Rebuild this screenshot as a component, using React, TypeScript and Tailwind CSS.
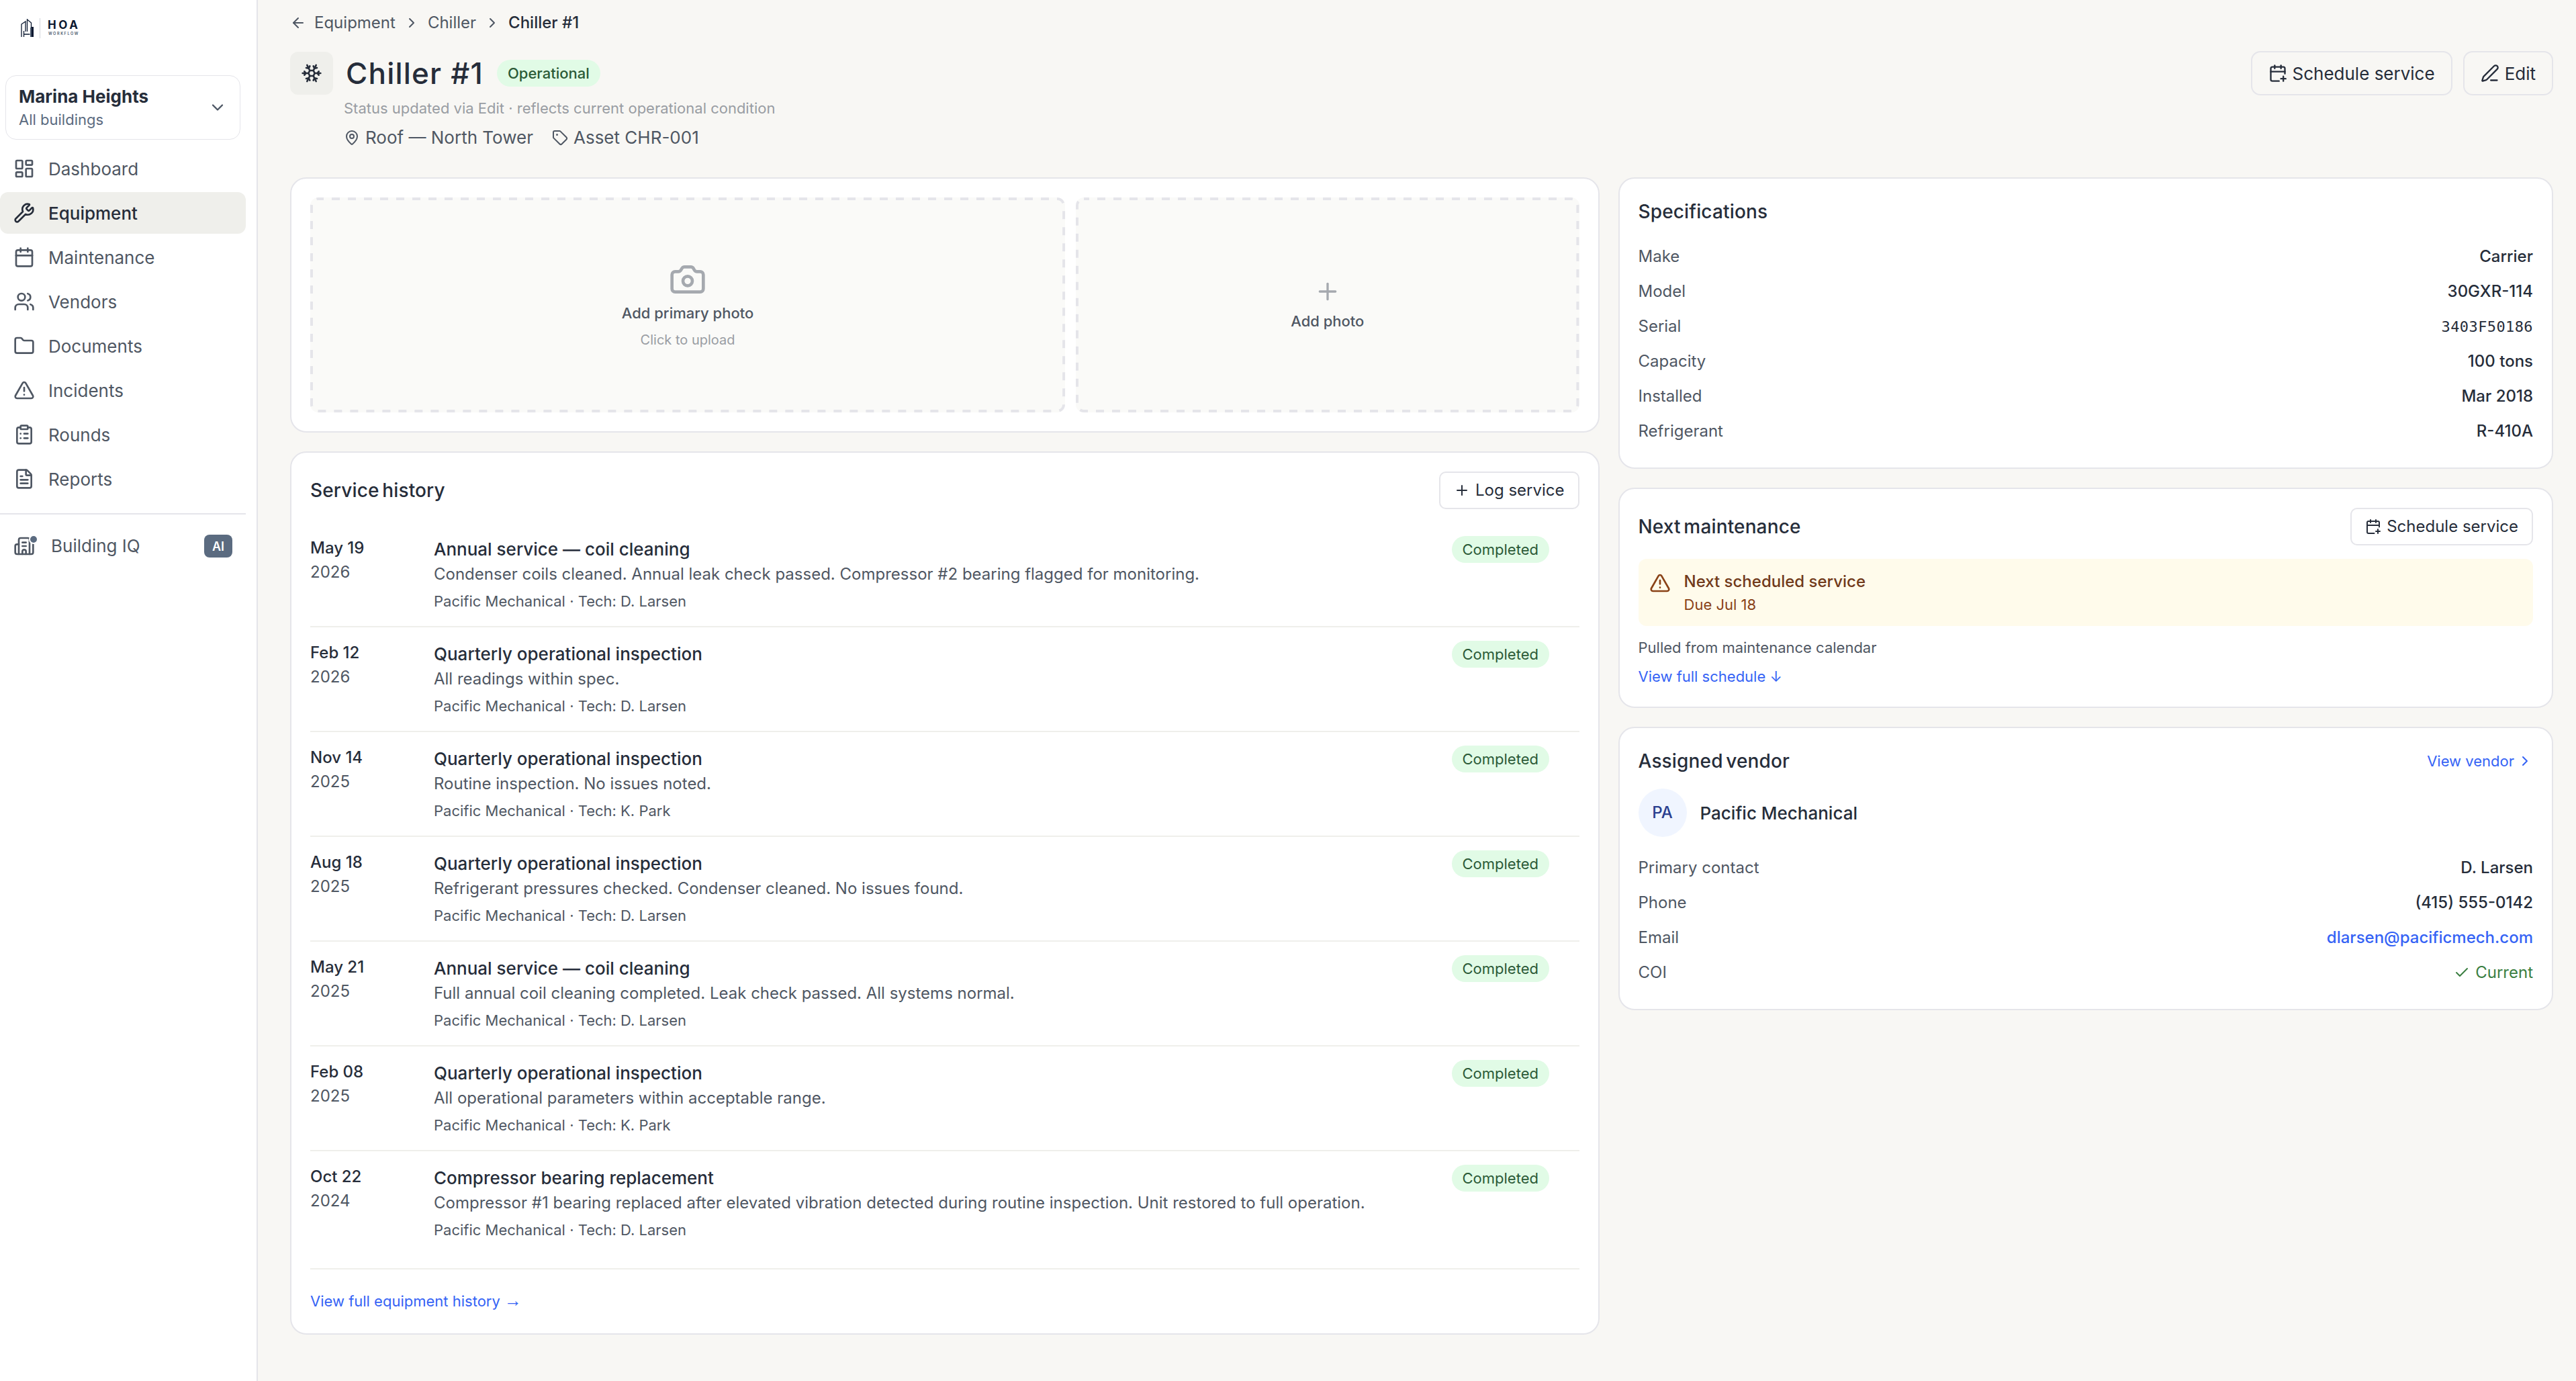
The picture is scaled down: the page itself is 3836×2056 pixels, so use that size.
import type { ReactNode } from 'react'
import {
  ArrowLeft,
  Building2,
  Calendar,
  CalendarPlus,
  Camera,
  Check,
  ChevronDown,
  ChevronRight,
  ClipboardList,
  FileText,
  Folder,
  LayoutDashboard,
  MapPin,
  PenLine,
  Plus,
  Snowflake,
  Tag,
  TriangleAlert,
  Users,
  Wrench,
  type LucideIcon,
} from 'lucide-react'

const navItems: { label: string; icon: LucideIcon; active?: boolean }[] = [
  { label: 'Dashboard', icon: LayoutDashboard },
  { label: 'Equipment', icon: Wrench, active: true },
  { label: 'Maintenance', icon: Calendar },
  { label: 'Vendors', icon: Users },
  { label: 'Documents', icon: Folder },
  { label: 'Incidents', icon: TriangleAlert },
  { label: 'Rounds', icon: ClipboardList },
  { label: 'Reports', icon: FileText },
]

const history = [
  {
    day: 'May 19',
    year: '2026',
    title: 'Annual service — coil cleaning',
    note: 'Condenser coils cleaned. Annual leak check passed. Compressor #2 bearing flagged for monitoring.',
    tech: 'D. Larsen',
  },
  {
    day: 'Feb 12',
    year: '2026',
    title: 'Quarterly operational inspection',
    note: 'All readings within spec.',
    tech: 'D. Larsen',
  },
  {
    day: 'Nov 14',
    year: '2025',
    title: 'Quarterly operational inspection',
    note: 'Routine inspection. No issues noted.',
    tech: 'K. Park',
  },
  {
    day: 'Aug 18',
    year: '2025',
    title: 'Quarterly operational inspection',
    note: 'Refrigerant pressures checked. Condenser cleaned. No issues found.',
    tech: 'D. Larsen',
  },
  {
    day: 'May 21',
    year: '2025',
    title: 'Annual service — coil cleaning',
    note: 'Full annual coil cleaning completed. Leak check passed. All systems normal.',
    tech: 'D. Larsen',
  },
  {
    day: 'Feb 08',
    year: '2025',
    title: 'Quarterly operational inspection',
    note: 'All operational parameters within acceptable range.',
    tech: 'K. Park',
  },
  {
    day: 'Oct 22',
    year: '2024',
    title: 'Compressor bearing replacement',
    note: 'Compressor #1 bearing replaced after elevated vibration detected during routine inspection. Unit restored to full operation.',
    tech: 'D. Larsen',
  },
]

function Logo() {
  return (
    <div className="flex h-[30px] items-center pl-[31px]">
      <svg width="20" height="28" viewBox="0 0 20 28" fill="none" stroke="#0b1830" strokeWidth="1.3">
        <path d="M1 27V8l6-4v15" />
        <path d="M9.5 19V1l6 5v7" />
        <path d="M4.5 27V18M4.5 23h9" />
        <path d="M14 27V13h2v14z" fill="#475569" stroke="none" />
        <path d="M16 27V12h3v15z" fill="#0b1830" stroke="none" />
      </svg>
      <div className="ml-2 h-[30px] w-px bg-gray-300" />
      <div className="ml-[11px] flex flex-col">
        <span className="text-[17px] leading-[15px] font-bold tracking-[3.6px] text-[#0b1830]">HOA</span>
        <span className="mt-[1px] ml-px text-[5.5px] leading-[8px] font-semibold tracking-[1.6px] text-[#475569]">
          WORKFLOW
        </span>
      </div>
    </div>
  )
}

function Sidebar() {
  return (
    <aside className="flex w-96 shrink-0 flex-col border-r-2 border-[#e5e5ea] bg-white pt-[27px]">
      <Logo />

      <button
        type="button"
        className="mt-[55px] ml-2 flex h-24 w-[350px] items-center justify-between rounded-2xl border border-[#e5e5ea] px-[19px] text-left"
      >
        <span className="flex flex-col">
          <span className="text-[26px] leading-[36px] font-bold text-[#262d3a]">Marina Heights</span>
          <span className="text-[22px] leading-[33px] text-[#5b6b80]">All buildings</span>
        </span>
        <ChevronDown className="size-7 text-[#4b5563]" />
      </button>

      <nav className="mt-3 flex w-[366px] flex-col gap-1">
        {navItems.map(({ label, icon: Icon, active }) => (
          <a
            key={label}
            className={[
              'flex h-[62px] items-center gap-5 rounded-xl pl-5 text-[26px]',
              active ? 'bg-[#efefeb] font-medium text-[#262d3a]' : 'text-[#4f5763]',
            ].join(' ')}
          >
            <Icon className="size-8" />
            {label}
          </a>
        ))}
      </nav>

      <div className="mt-5 flex w-[366px] items-center border-t-2 border-[#e5e5ea] px-5 pt-4">
        <div className="relative">
          <Building2 className="size-8 text-[#4f5763]" />
          <span className="absolute -top-[1px] -right-[5px] size-[14px] rounded-full border-2 border-white bg-[#5b6b80]" />
        </div>
        <span className="ml-6 text-[26px] leading-[62px] text-[#4f5763]">Building IQ</span>
        <span className="ml-auto flex h-[34px] w-[42px] items-center justify-center rounded-lg bg-[#5b6b80] text-[18px] font-semibold text-white">
          AI
        </span>
      </div>
    </aside>
  )
}

function Card({ className = '', children }: { className?: string; children: ReactNode }) {
  return (
    <section className={`rounded-[24px] border-2 border-[#e5e5ea] bg-white p-7 ${className}`}>{children}</section>
  )
}

function CardTitle({ children }: { children: ReactNode }) {
  return (
    <h2 className="text-[28px] leading-[42px] font-medium tracking-[0.15px] text-[#262d3a] [word-spacing:-3px]">
      {children}
    </h2>
  )
}

function SmallButton({ icon: Icon, children }: { icon: LucideIcon; children: ReactNode }) {
  return (
    <button
      type="button"
      className="flex h-14 items-center gap-2 rounded-[10px] border-2 border-[#e5e5ea] bg-white px-5 text-[24px] text-[#262d3a]"
    >
      <Icon className="size-6" />
      {children}
    </button>
  )
}

function Row({ label, children }: { label: string; children: ReactNode }) {
  return (
    <div className="flex h-[52px] items-center justify-between text-[24px]">
      <dt className="text-[#4f5763]">{label}</dt>
      <dd className="font-medium text-[#262d3a]">{children}</dd>
    </div>
  )
}

function Header() {
  return (
    <header>
      <div className="flex h-9 items-center gap-3 text-[24px] text-[#4f5763]">
        <ArrowLeft className="size-6" />
        <span>Equipment</span>
        <ChevronRight className="size-6" />
        <span>Chiller</span>
        <ChevronRight className="size-6" />
        <span className="font-medium text-[#262d3a]">Chiller #1</span>
      </div>

      <div className="mt-6 flex items-start justify-between">
        <div className="pt-px">
          <div className="flex items-center">
            <div className="grid size-16 place-items-center rounded-xl bg-[#efefeb]">
              <Snowflake className="size-8 text-[#262d3a]" />
            </div>
            <h1 className="ml-[19px] text-[44px] leading-[64px] font-medium tracking-[1.2px] text-[#262d3a]">
              Chiller #1
            </h1>
            <span className="ml-5 flex h-10 items-center rounded-full bg-[#e1fbe6] px-4 text-[22px] font-medium text-[#2b5a37]">
              Operational
            </span>
          </div>
          <p className="mt-1 ml-20 text-[22px] leading-[33px] text-[#999da3]">
            Status updated via Edit · reflects current operational condition
          </p>
          <div className="mt-[7px] ml-20 flex items-center text-[26px] leading-[39px] text-[#4f5763]">
            <MapPin className="mr-2 size-6" />
            Roof — North Tower
            <Tag className="mr-2 ml-7 size-6" />
            Asset CHR-001
          </div>
        </div>

        <div className="flex gap-4">
          <button
            type="button"
            className="flex h-[66px] items-center gap-2 rounded-[14px] border-2 border-[#e5e5ea] px-6 text-[26px] text-[#262d3a]"
          >
            <CalendarPlus className="size-7" />
            Schedule service
          </button>
          <button
            type="button"
            className="flex h-[66px] items-center gap-2 rounded-[14px] border-2 border-[#e5e5ea] px-6 text-[26px] text-[#262d3a]"
          >
            <PenLine className="size-7" />
            Edit
          </button>
        </div>
      </div>
    </header>
  )
}

function DropZone({ children }: { children: ReactNode }) {
  return (
    <div className="relative flex flex-col items-center justify-center rounded-xl bg-[#fafaf8]">
      {/* wide dashed outline, CSS dashes are too short */}
      <svg className="pointer-events-none absolute inset-0 size-full overflow-visible p-[2px]">
        <rect
          width="100%"
          height="100%"
          rx="10"
          fill="none"
          stroke="#e5e5ea"
          strokeWidth="4"
          strokeDasharray="12 12"
          strokeDashoffset="4"
        />
      </svg>
      {children}
    </div>
  )
}

function Photos() {
  return (
    <Card>
      <div className="grid h-80 grid-cols-[3fr_2fr] gap-4">
        <DropZone>
          <Camera className="size-14 text-[#a5a9af]" />
          <span className="mt-[6px] text-[22px] leading-[33px] font-medium text-[#4f5763]">Add primary photo</span>
          <span className="mt-2 text-[20px] leading-[30px] text-[#999da3]">Click to upload</span>
        </DropZone>
        <DropZone>
          <Plus className="size-10 text-[#a5a9af]" />
          <span className="mt-2 text-[22px] leading-[33px] font-medium text-[#4f5763]">Add photo</span>
        </DropZone>
      </div>
    </Card>
  )
}

function ServiceHistory() {
  return (
    <Card className="pb-[31px]">
      <div className="mb-5 flex items-center justify-between">
        <CardTitle>Service history</CardTitle>
        <SmallButton icon={Plus}>Log service</SmallButton>
      </div>
      <ul>
        {history.map((entry) => (
          <li
            key={entry.day + entry.year}
            className="grid grid-cols-[160px_1fr_190px] items-start border-b-2 border-[#efefeb] py-5 last:border-b-0"
          >
            <div className="text-[24px] leading-[36px]">
              <div className="font-medium text-[#262d3a]">{entry.day}</div>
              <div className="text-[#4f5763]">{entry.year}</div>
            </div>
            <div className="pl-6">
              <div className="text-[26px] leading-[39px] font-medium text-[#262d3a]">{entry.title}</div>
              <div className="text-[24px] leading-[36px] text-[#4f5763]">{entry.note}</div>
              <div className="mt-[6px] text-[22px] leading-[33px] text-[#4f5763]">
                Pacific Mechanical · Tech: {entry.tech}
              </div>
            </div>
            <span className="flex h-10 items-center justify-self-start rounded-full bg-[#e1fbe6] px-4 text-[22px] text-[#2b5a37]">
              Completed
            </span>
          </li>
        ))}
      </ul>
      <div className="mt-5 border-t-2 border-[#efefeb] pt-[31px]">
        <a className="block h-[33px] text-[22px] leading-[33px] text-[#3563f5]">
          View full equipment history{' '}
          <span className="font-['Liberation_Sans',sans-serif] text-[26px] leading-none">→</span>
        </a>
      </div>
    </Card>
  )
}

function Specifications() {
  return (
    <Card>
      <CardTitle>Specifications</CardTitle>
      <dl className="mt-5">
        <Row label="Make">Carrier</Row>
        <Row label="Model">30GXR-114</Row>
        <Row label="Serial">
          <span className="font-['DejaVu_Sans_Mono',monospace] text-[22px] tracking-[0.4px]">3403F50186</span>
        </Row>
        <Row label="Capacity">100 tons</Row>
        <Row label="Installed">Mar 2018</Row>
        <Row label="Refrigerant">R-410A</Row>
      </dl>
    </Card>
  )
}

function NextMaintenance() {
  return (
    <Card>
      <div className="mb-5 flex items-center justify-between">
        <CardTitle>Next maintenance</CardTitle>
        <SmallButton icon={CalendarPlus}>Schedule service</SmallButton>
      </div>
      <div className="flex h-[100px] items-start gap-5 rounded-xl bg-amber-50 p-4">
        <TriangleAlert className="mt-1 size-8 text-[#8a4217]" />
        <div>
          <div className="text-[24px] leading-[36px] font-medium text-[#713a1a]">Next scheduled service</div>
          <div className="text-[22px] leading-[33px] text-[#8a4217]">Due Jul 18</div>
        </div>
      </div>
      <p className="mt-4 text-[22px] leading-[33px] text-[#4f5763]">Pulled from maintenance calendar</p>
      <a className="mt-[10px] block text-[22px] leading-[33px] text-[#3563f5]">View full schedule ↓</a>
    </Card>
  )
}

function AssignedVendor() {
  return (
    <Card>
      <div className="flex items-center justify-between">
        <CardTitle>Assigned vendor</CardTitle>
        <a className="flex items-center gap-1 text-[22px] text-[#3563f5]">
          View vendor
          <ChevronRight className="size-6" />
        </a>
      </div>
      <div className="mt-5 flex items-center gap-5">
        <div className="grid size-[72px] place-items-center rounded-full bg-[#f0f5ff] text-[24px] font-medium text-[#2a3f8f]">
          PA
        </div>
        <span className="text-[26px] font-medium text-[#262d3a]">Pacific Mechanical</span>
      </div>
      <dl className="mt-5">
        <Row label="Primary contact">D. Larsen</Row>
        <Row label="Phone">(415) 555-0142</Row>
        <Row label="Email">
          <span className="text-[#3563f5]">dlarsen@pacificmech.com</span>
        </Row>
        <Row label="COI">
          <span className="flex items-center gap-2 font-normal text-[#3b7f42]">
            <Check className="size-6" />
            Current
          </span>
        </Row>
      </dl>
    </Card>
  )
}

export default function App() {
  return (
    <div className="flex h-[2056px] w-[3836px] overflow-hidden bg-[#f8f7f4] font-['Inter',sans-serif]">
      <Sidebar />
      <main className="min-w-0 flex-1 pt-4 pr-[34px] pl-12">
        <Header />
        <div className="mt-10 grid grid-cols-[7fr_5fr] items-start gap-7">
          <div className="flex min-w-0 flex-col gap-7">
            <Photos />
            <ServiceHistory />
          </div>
          <div className="flex min-w-0 flex-col gap-7">
            <Specifications />
            <NextMaintenance />
            <AssignedVendor />
          </div>
        </div>
      </main>
    </div>
  )
}
